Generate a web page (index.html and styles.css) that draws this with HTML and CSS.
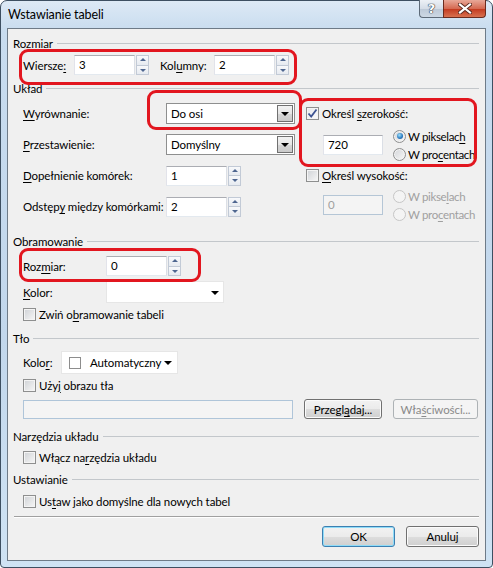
FILE: index.html
```html
<!DOCTYPE html>
<html lang="pl">
  <head>
    <meta charset="UTF-8">
    <title>Wstawianie tabeli</title>
    <link rel="stylesheet" href="styles.css">
  </head>
  <body>
    <div class="window">
      <div class="titlebar">
        <span class="title">Wstawianie tabeli</span>
        <div class="caption-buttons">
          <span class="cap-btn cap-help">?</span>
          <span class="cap-btn cap-close">
            <svg width="14" height="11" viewBox="0 0 14 11">
              <path d="M2 1.5 L12 9.5 M12 1.5 L2 9.5" stroke="#5a2a20" stroke-width="4" stroke-linecap="square"/>
              <path d="M2 1.5 L12 9.5 M12 1.5 L2 9.5" stroke="#ffffff" stroke-width="2.2" stroke-linecap="square"/>
            </svg>
          </span>
        </div>
      </div>

      <div class="client">
        <!-- Rozmiar -->
        <div class="group-head head-size"><span>Rozmiar</span></div>
        <div class="row row-size">
          <span class="lbl lbl-rows">Wiersze<u>:</u></span>
          <span class="spin"><span class="field">3</span><span class="updown"><i class="up"></i><i class="down"></i></span></span>
          <span class="lbl lbl-cols">Kol<u>u</u>mny:</span>
          <span class="spin"><span class="field">2</span><span class="updown"><i class="up"></i><i class="down"></i></span></span>
        </div>

        <!-- Układ -->
        <div class="group-head head-layout"><span>Układ</span></div>
        <div class="layout-body">
          <div class="layout-left">
            <span class="lbl"><u>W</u>yrównanie:</span>
            <span class="select">Do osi<span class="select-btn"><i class="tri"></i></span></span>
            <span class="lbl"><u>P</u>rzestawienie:</span>
            <span class="select">Domyślny<span class="select-btn"><i class="tri"></i></span></span>
            <span class="lbl"><u>D</u>opełnienie komórek:</span>
            <span class="spin"><span class="field">1</span><span class="updown"><i class="up"></i><i class="down"></i></span></span>
            <span class="lbl">Odstęp<u>y</u> między komórkami:</span>
            <span class="spin"><span class="field">2</span><span class="updown"><i class="up"></i><i class="down"></i></span></span>
          </div>
          <div class="layout-right">
            <div class="check-row"><span class="check checked"><svg width="11" height="11" viewBox="0 0 11 11"><path d="M1.5 5.5 L4.2 8.5 L9.5 1.5" fill="none" stroke="#3d5391" stroke-width="1.8"/></svg></span><span>Określ <u>s</u>zerokość:</span></div>
            <div class="dim-block">
              <span class="field field-dim">720</span>
              <div class="radios">
                <div class="radio-row"><span class="radio on"></span><span>W pikselac<u>h</u></span></div>
                <div class="radio-row"><span class="radio"></span><span>W pro<u>c</u>entach</span></div>
              </div>
            </div>
            <div class="check-row check-row-2"><span class="check"></span><span><u>O</u>kreśl wysokość:</span></div>
            <div class="dim-block dim-block-2 disabled">
              <span class="field field-dim field-off">0</span>
              <div class="radios">
                <div class="radio-row"><span class="radio off"></span><span>W pikse<u>l</u>ach</span></div>
                <div class="radio-row"><span class="radio off"></span><span>W pro<u>c</u>entach</span></div>
              </div>
            </div>
          </div>
        </div>

        <!-- Obramowanie -->
        <div class="group-head head-border"><span>Obramowanie</span></div>
        <div class="row row-bsize">
          <span class="lbl lbl-border">Roz<u>m</u>iar:</span>
          <span class="spin"><span class="field">0</span><span class="updown"><i class="up"></i><i class="down"></i></span></span>
        </div>
        <div class="row row-bcolor">
          <span class="lbl lbl-border"><u>K</u>olor:</span>
          <span class="combo combo-border"><i class="tri"></i></span>
        </div>
        <div class="check-row check-line line-collapse"><span class="check"></span><span>Zwiń o<u>b</u>ramowanie tabeli</span></div>

        <!-- Tło -->
        <div class="group-head head-bg"><span>Tło</span></div>
        <div class="row row-bgcolor">
          <span class="lbl lbl-bg">Kolo<u>r</u>:</span>
          <span class="combo combo-bg"><span class="swatch"></span><span>Automatyczny</span><i class="tri"></i></span>
        </div>
        <div class="check-row check-line line-image"><span class="check"></span><span>Uży<u>j</u> obrazu tła</span></div>
        <div class="row row-image">
          <span class="field field-path"></span>
          <span class="btn btn-browse"><span>Przegl<u>ą</u>daj...</span></span>
          <span class="btn btn-props btn-off"><span>Wła<u>ś</u>ciwości...</span></span>
        </div>

        <!-- Narzędzia układu -->
        <div class="group-head head-tools"><span>Narzędzia układu</span></div>
        <div class="check-row check-line line-tools"><span class="check"></span><span>Włącz na<u>r</u>zędzia układu</span></div>

        <!-- Ustawianie -->
        <div class="group-head head-default"><span>Ustawianie</span></div>
        <div class="check-row check-line line-default"><span class="check"></span><span>Us<u>t</u>aw jako domyślne dla nowych tabel</span></div>

        <div class="separator"></div>
        <div class="actions">
          <span class="btn btn-default">OK</span>
          <span class="btn">Anuluj</span>
        </div>

        <!-- red annotation marks -->
        <div class="mark mark-size"></div>
        <div class="mark mark-align"></div>
        <div class="mark mark-width"></div>
        <div class="mark mark-bsize"></div>
      </div>
    </div>
  </body>
</html>
```

FILE: styles.css
```css
/* Page */
body {
    margin: 0;
    background: #ffffff;
    font-family: "Lato", "Liberation Sans", sans-serif;
    font-size: 11.5px;
    letter-spacing: -0.1px;
    color: #000000;
}

u {
    text-decoration-thickness: 1px;
    text-underline-offset: 2px;
}

/* Aero window frame */
.window {
    box-sizing: border-box;
    width: 493px;
    height: 568px;
    border: 1px solid #3d4f61;
    border-radius: 7px 7px 4px 4px;
    padding: 0 6px 6px 6px;
    background: linear-gradient(#dde9f5, #c8dcef 30px, #c2d7ec 60%, #cfe3f4);
    display: flex;
    flex-direction: column;
}

.titlebar {
    height: 27px;
    display: flex;
    justify-content: space-between;
    align-items: flex-start;
    padding-left: 1px;
}

.title {
    font-size: 12.5px;
    letter-spacing: -0.1px;
    line-height: 13px;
    margin-top: 7px;
    color: #000000;
}

.caption-buttons {
    display: flex;
    margin-top: -1px;
}

.cap-btn {
    box-sizing: border-box;
    height: 18px;
    display: flex;
    align-items: center;
    justify-content: center;
    border: 1px solid #5d6a78;
    border-top: none;
}

.cap-help {
    width: 24px;
    border-radius: 0 0 0 4px;
    border-right: none;
    background: linear-gradient(#edf1f6, #d5dde7 50%, #bcc8d6 51%, #cdd8e4);
    color: #ffffff;
    font-family: "DejaVu Sans", sans-serif;
    font-size: 13px;
    font-weight: bold;
    text-shadow: 0 0 1px #2b3440, 0 0 1px #2b3440, 0 0 1px #2b3440;
}

.cap-close {
    width: 43px;
    border-radius: 0 0 4px 0;
    background: linear-gradient(#e8a898, #d56a52 50%, #c2371d 51%, #d8714f);
    border-color: #6b2b1e;
}

/* Client area */
.client {
    position: relative;
    flex: 1;
    background: #f0f0f0;
    border: 1px solid #6e7b88;
    padding: 7px 6px 0 5px;
}

.group-head {
    height: 14px;
    display: flex;
    align-items: center;
    gap: 4px;
}

.group-head::after {
    content: "";
    flex: 1;
    height: 1px;
    background: #c3c7cb;
}

.head-layout { margin-top: 6px; }
.head-border { margin-top: 11px; }
.head-bg { margin-top: 10px; }
.head-tools { margin-top: 10px; }
.head-default { margin-top: 8px; }

.row {
    display: flex;
    align-items: center;
    padding-left: 10px;
}

.lbl {
    white-space: nowrap;
}

.row-size { margin-top: 5px; height: 20px; }
.lbl-rows { width: 51px; }
.lbl-cols { width: 54px; margin-left: 11px; }

/* Text fields and spinners */
.spin {
    display: flex;
    align-items: stretch;
    height: 20px;
}

.field {
    box-sizing: border-box;
    display: block;
    width: 61px;
    height: 20px;
    background: #ffffff;
    border: 1px solid;
    border-color: #abadb3 #dbdfe6 #e3e9ef #e2e3ea;
    padding-left: 4px;
    line-height: 18px;
}

.updown {
    display: flex;
    flex-direction: column;
    width: 13px;
    margin-left: 1px;
}

.updown i {
    flex: 1;
    position: relative;
    border: 1px solid #c2cad6;
    background: linear-gradient(#f8f9fb, #e6eaf0);
}

.updown i + i {
    border-top: none;
}

.updown i::after {
    content: "";
    position: absolute;
    left: 3px;
    top: 2px;
    border-left: 3px solid transparent;
    border-right: 3px solid transparent;
}

.updown .up::after {
    border-bottom: 3px solid #4e6690;
}

.updown .down::after {
    top: 3px;
    border-top: 3px solid #4e6690;
}

/* Układ */
.layout-body {
    display: flex;
    gap: 11px;
    margin-top: 8px;
    padding-left: 10px;
}

.layout-left {
    display: grid;
    grid-template-columns: 143px 129px;
    grid-auto-rows: 21px;
    row-gap: 10px;
    align-items: center;
}

.select {
    box-sizing: border-box;
    position: relative;
    height: 21px;
    border: 1px solid #8e8f8f;
    background: #ffffff;
    padding-left: 4px;
    line-height: 19px;
}

.select-btn {
    position: absolute;
    right: 1px;
    top: 1px;
    bottom: 1px;
    width: 16px;
    box-sizing: border-box;
    border: 1px solid #707070;
    background: linear-gradient(#f2f2f2, #e6e6e6 50%, #d6d6d6 51%, #cacaca);
    display: flex;
    align-items: center;
    justify-content: center;
}

.tri {
    display: block;
    width: 0;
    height: 0;
    border-left: 4px solid transparent;
    border-right: 4px solid transparent;
    border-top: 4px solid #000000;
}

.layout-right {
    display: flex;
    flex-direction: column;
}

.check-row {
    display: flex;
    align-items: center;
    gap: 3px;
    height: 21px;
    white-space: nowrap;
}

.check-row-2 { margin-top: 2px; }

.check {
    box-sizing: border-box;
    width: 13px;
    height: 13px;
    border: 1px solid #8e8f8f;
    background: linear-gradient(135deg, #cfd2d6, #f7f7f7);
    box-shadow: inset 0 0 0 1px #f4f4f4;
    display: flex;
    align-items: center;
    justify-content: center;
}

.check.checked {
    background: linear-gradient(135deg, #e6e8ec, #fbfbfb);
}

.dim-block {
    display: flex;
    align-items: center;
    margin-top: 3px;
    height: 36px;
}

.dim-block-2 { margin-top: 1px; }

.field-dim {
    width: 60px;
    margin-left: 17px;
}

.field-off {
    background: #f4f4f4;
    border-color: #b5c6d6;
    color: #a0a0a0;
}

.radios {
    margin-left: 10px;
}

.radio-row {
    display: flex;
    align-items: center;
    gap: 2px;
    height: 18px;
    white-space: nowrap;
    letter-spacing: -0.35px;
}

.radio {
    box-sizing: border-box;
    width: 13px;
    height: 13px;
    border-radius: 50%;
    border: 1px solid #8e8f8f;
    background: linear-gradient(135deg, #d2d4d8, #f8f8f8);
    box-shadow: inset 0 0 0 1px #f3f3f3;
    display: flex;
    align-items: center;
    justify-content: center;
}

.radio.on::after {
    content: "";
    width: 6px;
    height: 6px;
    border-radius: 50%;
    background: radial-gradient(circle at 40% 35%, #9fe0fb, #2a7ac0 60%, #184f8c);
}

.radio.off {
    border-color: #c6c6c6;
    background: #f4f4f4;
    box-shadow: none;
}

.disabled {
    color: #a0a0a0;
}

/* Obramowanie */
.row-bsize { margin-top: 8px; height: 20px; }
.row-bcolor { margin-top: 5px; height: 22px; }
.lbl-border { width: 83px; }

.combo {
    box-sizing: border-box;
    position: relative;
    display: flex;
    align-items: center;
    height: 22px;
    background: #ffffff;
    border: 1px solid #e6e6e6;
}

.combo .tri {
    position: absolute;
    right: 4px;
    top: 9px;
}

.combo-border { width: 118px; }

.check-line {
    height: 14px;
    padding-left: 10px;
}

.line-collapse { margin-top: 4px; }

/* Tło */
.row-bgcolor { margin-top: 6px; height: 23px; }
.lbl-bg { width: 38px; }

.combo-bg {
    width: 117px;
    height: 23px;
}

.swatch {
    box-sizing: border-box;
    width: 12px;
    height: 12px;
    border: 1px solid #8d8d8d;
    background: #ffffff;
    margin-left: 7px;
    margin-right: 9px;
}

.combo-bg .tri {
    right: 5px;
}

.line-image { margin-top: 4px; }

.row-image {
    margin-top: 7px;
    height: 20px;
}

.field-path {
    width: 270px;
    height: 19px;
    background: #f4f4f4;
    border-color: #afc5d9;
}

/* Buttons */
.btn {
    box-sizing: border-box;
    height: 20px;
    display: flex;
    align-items: center;
    justify-content: center;
    border: 1px solid #707070;
    border-radius: 3px;
    background: linear-gradient(#f2f2f2, #ebebeb 50%, #dddddd 51%, #cfcfcf);
    box-shadow: inset 0 0 0 1px #fbfbfb;
    white-space: nowrap;
}

.btn-browse {
    width: 78px;
    margin-left: 11px;
}

.btn-props {
    width: 85px;
    margin-left: 11px;
}

.btn-off {
    border-color: #adb2b5;
    background: #f4f4f4;
    box-shadow: none;
    color: #8a8a8a;
}

.line-tools { margin-top: 7px; }
.line-default { margin-top: 8px; }

.separator {
    margin: 8px 0 0 1px;
    height: 1px;
    background: #a0a0a0;
    border-bottom: 1px solid #ffffff;
}

.actions {
    display: flex;
    justify-content: flex-end;
    gap: 11px;
    margin-top: 8px;
}

.actions .btn {
    width: 73px;
    height: 21px;
}

.btn-default {
    border-color: #3c7fb1;
    box-shadow: inset 0 0 0 1px #8fdcf8;
}

/* Red annotation marks drawn over the dialog */
.mark {
    position: absolute;
    box-sizing: border-box;
    border: 3px solid #e2161f;
    border-radius: 9px;
}

.mark-size { left: 11px; top: 20px; width: 278px; height: 36px; }
.mark-align { left: 139px; top: 61px; width: 155px; height: 40px; }
.mark-width { left: 291px; top: 69px; width: 178px; height: 69px; }
.mark-bsize { left: 11px; top: 219px; width: 182px; height: 34px; }
```
